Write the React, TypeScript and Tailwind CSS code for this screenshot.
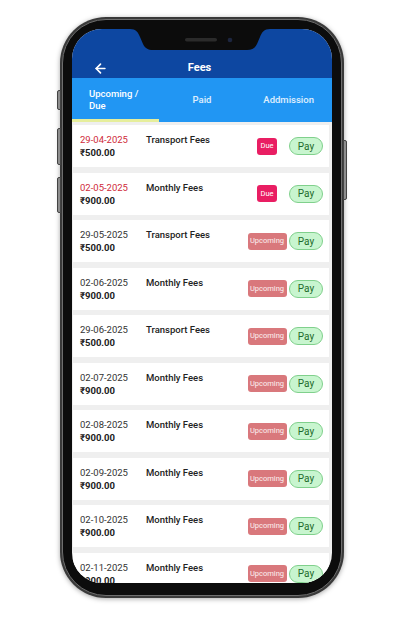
import React from 'react';
import { ArrowLeft } from 'lucide-react';

type Fee = { date: string; name: string; amount: string; status: 'Due' | 'Upcoming' };

const fees: Fee[] = [
  { date: '29-04-2025', name: 'Transport Fees', amount: '₹500.00', status: 'Due' },
  { date: '02-05-2025', name: 'Monthly Fees', amount: '₹900.00', status: 'Due' },
  { date: '29-05-2025', name: 'Transport Fees', amount: '₹500.00', status: 'Upcoming' },
  { date: '02-06-2025', name: 'Monthly Fees', amount: '₹900.00', status: 'Upcoming' },
  { date: '29-06-2025', name: 'Transport Fees', amount: '₹500.00', status: 'Upcoming' },
  { date: '02-07-2025', name: 'Monthly Fees', amount: '₹900.00', status: 'Upcoming' },
  { date: '02-08-2025', name: 'Monthly Fees', amount: '₹900.00', status: 'Upcoming' },
  { date: '02-09-2025', name: 'Monthly Fees', amount: '₹900.00', status: 'Upcoming' },
  { date: '02-10-2025', name: 'Monthly Fees', amount: '₹900.00', status: 'Upcoming' },
  { date: '02-11-2025', name: 'Monthly Fees', amount: '₹900.00', status: 'Upcoming' },
];

const FeeRow: React.FC<{ fee: Fee }> = ({ fee }) => {
  const due = fee.status === 'Due';
  return (
    <div className="h-[42px] shrink-0 bg-white ml-[1px] mr-[3px] mb-[5.5px] flex items-center pl-[7px] pr-[6px]">
      <div className="flex-1 flex flex-col text-[9.5px] leading-[13px]">
        <div className="flex">
          <span className={`w-[66px] ${due ? 'text-[#cf2a3a]' : 'text-[#333]'}`}>{fee.date}</span>
          <span className="font-medium text-[#222]">{fee.name}</span>
        </div>
        <span className="font-bold text-[#222]">{fee.amount}</span>
      </div>
      <div className="w-[40px] flex justify-center">
        {due ? (
          <span className="w-[20px] h-[17px] rounded-[3px] bg-[#e91e63] text-white text-[7.5px] flex items-center justify-center">Due</span>
        ) : (
          <span className="w-[39px] h-[17px] rounded-[3px] bg-[#d9787c] text-white/90 text-[7.5px] flex items-center justify-center">Upcoming</span>
        )}
      </div>
      <button className="ml-[2px] w-[34px] h-[18px] rounded-full border border-[#80d08c] bg-[#c8f5cf] text-[#1e6b2b] text-[10px] flex items-center justify-center">
        Pay
      </button>
    </div>
  );
};

export default function App() {
  return (
    <div className="w-[404px] h-[617px] bg-white flex justify-center pt-[17px] font-['Roboto',sans-serif] overflow-hidden">
      <div className="relative w-[284px] h-[581px] rounded-[46px] bg-[#3a3a3a] p-[2px] shadow-[0_1px_5px_rgba(0,0,0,0.35)]">
        {/* side buttons */}
        <div className="absolute left-[-3px] top-[73px] w-[4px] h-[20px] rounded-l-[2px] bg-[#8d8d8d] border border-[#444]" />
        <div className="absolute left-[-3px] top-[111px] w-[4px] h-[37px] rounded-l-[2px] bg-[#8d8d8d] border border-[#444]" />
        <div className="absolute left-[-3px] top-[160px] w-[4px] h-[36px] rounded-l-[2px] bg-[#8d8d8d] border border-[#444]" />
        <div className="absolute right-[-3px] top-[123px] w-[4px] h-[60px] rounded-r-[2px] bg-[#8d8d8d] border border-[#444]" />

        <div className="w-full h-full rounded-[44px] bg-[#0c0c0c] border border-[#6e6e6e] pt-[9px] pl-[9px] pr-[9px] pb-[12px]">
          <div className="relative w-full h-full rounded-[30px] overflow-hidden bg-[#efefef] flex flex-col">
            {/* notch */}
            <svg className="absolute top-0 left-[58px]" width="140" height="21" viewBox="0 0 140 21">
              <path d="M0 0 H140 C134 0 132 3 130 8 L127 15 C125 19 122 21 117 21 H23 C18 21 15 19 13 15 L10 8 C8 3 6 0 0 0 Z" fill="#0c0c0c" />
              <rect x="55" y="9" width="32" height="3.5" rx="1.75" fill="#2b2b2b" />
              <circle cx="100" cy="11" r="2.3" fill="#1d2640" />
            </svg>

            {/* header */}
            <div className="h-[49px] shrink-0 bg-[#0d47a1] pt-[29px]">
              <div className="h-[20px] flex items-center">
                <ArrowLeft className="ml-[21px] text-white" size={15} strokeWidth={2.6} />
                <span className="flex-1 mr-[41px] text-center text-white font-bold text-[11px]">Fees</span>
              </div>
            </div>

            {/* tabs */}
            <div className="h-[44px] shrink-0 bg-[#2196f3] grid grid-cols-3 text-[9.5px] font-medium leading-[12px]">
              <div className="border-b-[3px] border-[#e6ee9c] flex items-center pl-[17px] pt-[3px]">
                <span className="w-[56px] text-white">Upcoming / Due</span>
              </div>
              <div className="flex items-center justify-center text-white/85">Paid</div>
              <div className="flex items-center justify-center text-white/85">Addmission</div>
            </div>

            {/* list */}
            <div className="flex-1 overflow-hidden pt-[3px] flex flex-col">
              {fees.map((f, i) => (
                <FeeRow key={i} fee={f} />
              ))}
            </div>
          </div>
        </div>
      </div>
    </div>
  );
}
